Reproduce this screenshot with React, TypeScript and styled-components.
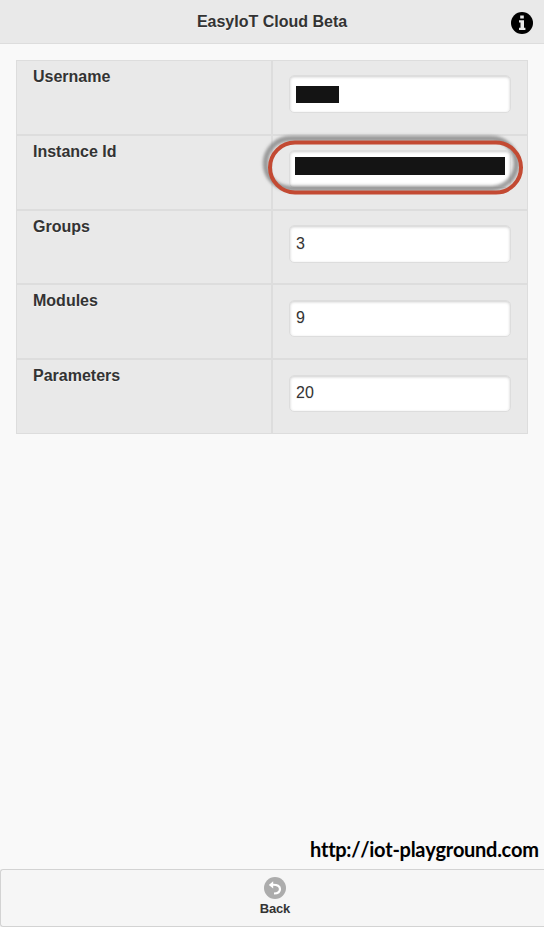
import React from 'react';
import styled, { createGlobalStyle } from 'styled-components';

const GlobalStyle = createGlobalStyle`
  *, *::before, *::after { box-sizing: border-box; }
  body {
    margin: 0;
    background: #f9f9f9;
    color: #333;
    font-family: "Liberation Sans", Arial, sans-serif;
    font-size: 16px;
    text-shadow: 0 1px 0 #f3f3f3;
  }
`;

const Page = styled.div`
  display: flex;
  flex-direction: column;
  height: 927px;
`;

const Header = styled.header`
  display: grid;
  grid-template-columns: 44px 1fr 44px;
  align-items: center;
  height: 44px;
  background: #e9e9e9;
  border-bottom: 1px solid #ddd;
`;

const Title = styled.h1`
  grid-column: 2;
  margin: 0;
  font-size: 16px;
  line-height: 20px;
  text-align: center;
`;

const InfoButton = styled.button`
  display: flex;
  width: 22px;
  height: 22px;
  margin: 3px 0 0 11px;
  padding: 0;
  border: 0;
  background: none;
`;

const Content = styled.main`
  flex: 1;
  display: flex;
  flex-direction: column;
  padding: 16px 16px 0;
`;

const Table = styled.section`
  display: flex;
  flex-direction: column;
`;

const Row = styled.div<{ $height: number }>`
  position: relative;
  display: grid;
  grid-template-columns: repeat(2, minmax(0, 1fr));
  height: ${({ $height }) => $height}px;
`;

const Cell = styled.div`
  padding: 0 16px;
  border: 1px solid #ddd;
  background: #e9e9e9;
`;

const Label = styled.label`
  display: block;
  padding-top: 5px;
  font-weight: bold;
  line-height: 21px;
`;

const Field = styled.div<{ $tall: boolean }>`
  display: flex;
  align-items: center;
  height: ${({ $tall }) => ($tall ? 38 : 37)}px;
  margin-top: ${({ $tall }) => ($tall ? 14 : 15)}px;
  padding: 0 6px ${({ $tall }) => ($tall ? 0 : 2)}px;
  border: 1px solid #ddd;
  border-radius: 5px;
  background: #fff;
  box-shadow: inset 0 1px 3px rgba(0, 0, 0, 0.2);
`;

const Redaction = styled.span<{ $width: number; $height: number; $left: number; $raise: number }>`
  flex: none;
  width: ${({ $width }) => $width}px;
  height: ${({ $height }) => $height}px;
  margin-left: ${({ $left }) => $left}px;
  margin-bottom: ${({ $raise }) => $raise}px;
  background: #141414;
`;

const Highlight = styled.svg`
  position: absolute;
  left: 240px;
  top: -7px;
  pointer-events: none;
`;

const SiteLink = styled.div`
  margin: auto -11px 7px 0;
  align-self: flex-end;
  width: 229px;
  color: #000;
  font: bold 20px/26px Lato, sans-serif;
  font-variant-ligatures: none;
  font-kerning: none;
  letter-spacing: -0.29px;
  white-space: nowrap;
`;

const Footer = styled.footer`
  display: flex;
  flex-direction: column;
  align-items: center;
  height: 58px;
  padding: 7px 0 0 4px;
  border: 1px solid #d3d3d3;
  border-right: 0;
  border-radius: 3px 0 0 3px;
  background: #f6f6f6;
`;

const FooterLabel = styled.span`
  padding: 1px 0 0 1px;
  font-size: 13px;
  font-weight: bold;
  line-height: 18px;
  letter-spacing: -0.2px;
`;

const fields = [
  { label: 'Username', height: 75, tall: true, value: <Redaction $width={43} $height={17} $left={0} $raise={0} /> },
  { label: 'Instance Id', height: 75, tall: true, value: <Redaction $width={210} $height={18} $left={-1} $raise={6} />, marked: true },
  { label: 'Groups', height: 74, tall: true, value: '3' },
  { label: 'Modules', height: 75, tall: false, value: '9' },
  { label: 'Parameters', height: 75, tall: false, value: '20' },
];

const InfoIcon = () => (
  <svg width="22" height="22" viewBox="0 0 22 22">
    <circle cx="11" cy="11" r="11" fill="#000" />
    <path d="M9.2 3.5h3.6v3H9.2zM8 8.2h5v7.5h1.4V18H8v-2.3h1.5v-5.2H8z" fill="#e9e9e9" />
  </svg>
);

const BackIcon = () => (
  <svg width="22" height="22" viewBox="0 0 22 22">
    <circle cx="11" cy="11" r="11" fill="#acacac" />
    <path d="M8 7.8c5.5-.3 8 1.2 8 4.2 0 3-2.7 4.5-6 4.5" fill="none" stroke="#fff" strokeWidth="2.2" />
    <path d="M4.8 8 9.2 4.2v7.4z" fill="#fff" />
  </svg>
);

const Callout = () => (
  <Highlight width="276" height="75" viewBox="0 0 276 75">
    <defs>
      <filter id="soft" x="-5%" y="-20%" width="110%" height="140%">
        <feGaussianBlur stdDeviation="1.7" />
      </filter>
    </defs>
    <rect x="9.5" y="10.5" width="251" height="50" rx="25" fill="none" stroke="#777" strokeOpacity=".7" strokeWidth="5.5" filter="url(#soft)" />
    <rect x="14" y="14.5" width="251" height="50" rx="25" fill="none" stroke="#c34a33" strokeWidth="4" />
  </Highlight>
);

export default function App() {
  return (
    <Page>
      <GlobalStyle />
      <Header>
        <Title>EasyIoT Cloud Beta</Title>
        <InfoButton aria-label="Info"><InfoIcon /></InfoButton>
      </Header>
      <Content>
        <Table>
          {fields.map(({ label, height, tall, value, marked }) => (
            <Row key={label} $height={height}>
              <Cell><Label>{label}</Label></Cell>
              <Cell><Field $tall={tall}>{value}</Field></Cell>
              {marked && <Callout />}
            </Row>
          ))}
        </Table>
        <SiteLink>http://iot-playground.com</SiteLink>
      </Content>
      <Footer>
        <BackIcon />
        <FooterLabel>Back</FooterLabel>
      </Footer>
    </Page>
  );
}
